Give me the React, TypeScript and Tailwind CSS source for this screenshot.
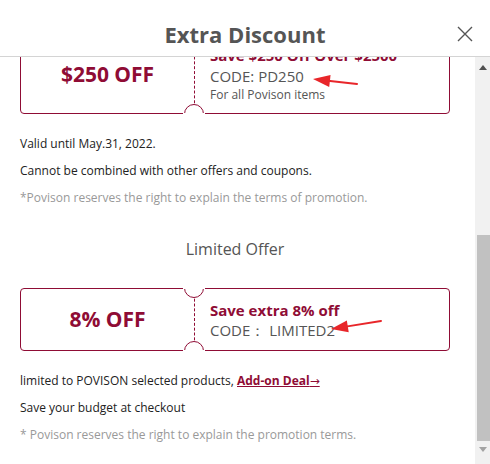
import React, { useEffect, useRef } from "react";

function Arrow({ x1, y1, x2, y2 }: { x1: number; y1: number; x2: number; y2: number }) {
  const dx = x2 - x1;
  const dy = y2 - y1;
  const len = Math.sqrt(dx * dx + dy * dy);
  const ux = dx / len;
  const uy = dy / len;
  const hl = 17;
  const hw = 6;
  const bx = x2 - ux * hl;
  const by = y2 - uy * hl;
  const p1 = `${x2},${y2}`;
  const p2 = `${bx - uy * hw},${by + ux * hw}`;
  const p3 = `${bx + uy * hw},${by - ux * hw}`;
  return (
    <svg className="pointer-events-none absolute left-0 top-0" width="440" height="80" style={{ overflow: "visible" }}>
      <line x1={x1} y1={y1} x2={bx + ux * 2} y2={by + uy * 2} stroke="#e8262a" strokeWidth="2" strokeLinecap="round" />
      <polygon points={`${p1} ${p2} ${p3}`} fill="#e8262a" />
    </svg>
  );
}

function Coupon({
  left,
  title,
  code,
  sub,
  tall,
  arrow,
}: {
  left: string;
  title: string;
  code: string;
  sub?: string;
  tall?: boolean;
  arrow?: { x1: number; y1: number; x2: number; y2: number };
}) {
  return (
    <div className={`relative flex rounded-[4px] border border-[#8f0c35] ${tall ? "h-[78px]" : "h-[63px]"}`}>
      <div className="flex w-[173px] items-center justify-center text-[21px] font-bold text-[#8f0c35]">{left}</div>
      <div className="border-l border-dashed border-[#8f0c35]" />
      <div className={`flex flex-col justify-center pl-[15px] ${tall ? "pb-[4px]" : ""}`}>
        <div className={`text-[15px] font-bold text-[#8f0c35] ${tall ? "leading-[22px]" : "leading-[20px]"}`}>{title}</div>
        <div className="text-[15px] leading-[20px] text-[#555]">{code}</div>
        {sub && <div className="text-[12px] leading-[17px] text-[#555]">{sub}</div>}
      </div>
      <div className="absolute left-[163px] top-[-11px] h-[20px] w-[20px] rounded-full border border-[#8f0c35] bg-white [clip-path:inset(50%_0_0_0)]" />
      <div className="absolute left-[162px] top-[-2px] h-[2px] w-[22px] bg-white" />
      <div className="absolute bottom-[-11px] left-[163px] h-[20px] w-[20px] rounded-full border border-[#8f0c35] bg-white [clip-path:inset(0_0_50%_0)]" />
      <div className="absolute bottom-[-2px] left-[162px] h-[2px] w-[22px] bg-white" />
      {arrow && <Arrow {...arrow} />}
    </div>
  );
}

export default function App() {
  const ref = useRef<HTMLDivElement>(null);
  const target = useRef<HTMLDivElement>(null);
  useEffect(() => {
    if (ref.current && target.current) {
      ref.current.scrollTop = target.current.offsetTop + 21;
    }
  }, []);
  return (
    <div
      className="flex h-[464px] w-[490px] flex-col bg-white"
      style={{ fontFamily: '"Open Sans", "Noto Sans", sans-serif' }}
    >
      <div className="relative flex h-[57px] shrink-0 items-center justify-center border-b border-[#d4d4d4] pt-[12px]">
        <div className="text-[22px] font-bold text-[#555]">Extra Discount</div>
        <svg className="absolute right-[17px] top-[26px]" width="16" height="16" viewBox="0 0 16 16">
          <path d="M1 1 L15 15 M15 1 L1 15" stroke="#555" strokeWidth="1.4" />
        </svg>
      </div>
      <div className="flex min-h-0 flex-1">
        <div ref={ref} className="relative min-w-0 flex-1 overflow-hidden">
          <div className="pl-[20px] pr-[25px]">
            <div className="pt-[20px] text-center text-[16px] leading-[24px] text-[#555]">Storewide Offer</div>
            <div className="mt-[27px]">
              <Coupon left="$100 OFF" title="Save $100 Off Over $1000" code="CODE: PD100" sub="For all Povison items" tall />
            </div>
            <div className="mt-[21px] text-[12px] leading-[18px] text-[#222]">
              <p className="mb-[9px]">Valid until May.31, 2022.</p>
              <p className="mb-[9px]">Cannot be combined with other offers and coupons.</p>
            </div>
            <div className="mt-[29px] text-center text-[16px] leading-[24px] text-[#555]">Big Sale</div>
            <div ref={target} className="mt-[27px]">
              <Coupon
                left="$250 OFF"
                title="Save $250 Off Over $2500"
                code="CODE: PD250"
                sub="For all Povison items"
                tall
                arrow={{ x1: 336, y1: 47, x2: 292, y2: 42 }}
              />
            </div>
            <div className="mt-[21px] text-[12px] leading-[18px] text-[#222]">
              <p className="mb-[9px]">Valid until May.31, 2022.</p>
              <p className="mb-[9px]">Cannot be combined with other offers and coupons.</p>
              <p className="text-[#999]">*Povison reserves the right to explain the terms of promotion.</p>
            </div>
            <div className="mt-[30px] text-center text-[16px] leading-[24px] text-[#555]">Limited Offer</div>
            <div className="mt-[27px]">
              <Coupon
                left="8% OFF"
                title="Save extra 8% off"
                code="CODE： LIMITED2"
                arrow={{ x1: 360, y1: 32, x2: 310, y2: 40 }}
              />
            </div>
            <div className="mt-[21px] pb-[40px] text-[12px] leading-[18px] text-[#222]">
              <p className="mb-[9px]">
                limited to POVISON selected products,{" "}
                <a className="font-bold text-[#8f0c35] underline">
                  Add-on Deal<span className="font-['DejaVu_Sans'] font-normal">→</span>
                </a>
              </p>
              <p className="mb-[9px]">Save your budget at checkout</p>
              <p className="text-[#999]">* Povison reserves the right to explain the promotion terms.</p>
            </div>
          </div>
        </div>
        <div className="flex w-[15px] shrink-0 flex-col bg-[#f1f1f1]">
          <div className="flex h-[17px] items-center justify-center pt-[4px]">
            <svg width="8" height="5" viewBox="0 0 8 5">
              <polygon points="4,0 8,5 0,5" fill="#505050" />
            </svg>
          </div>
          <div className="h-[161px]" />
          <div className="ml-[2px] h-[206px] w-[13px] bg-[#c1c1c1]" />
          <div className="flex h-[16px] items-center justify-center">
            <svg width="8" height="5" viewBox="0 0 8 5">
              <polygon points="0,0 8,0 4,5" fill="#a3a3a3" />
            </svg>
          </div>
        </div>
      </div>
    </div>
  );
}
